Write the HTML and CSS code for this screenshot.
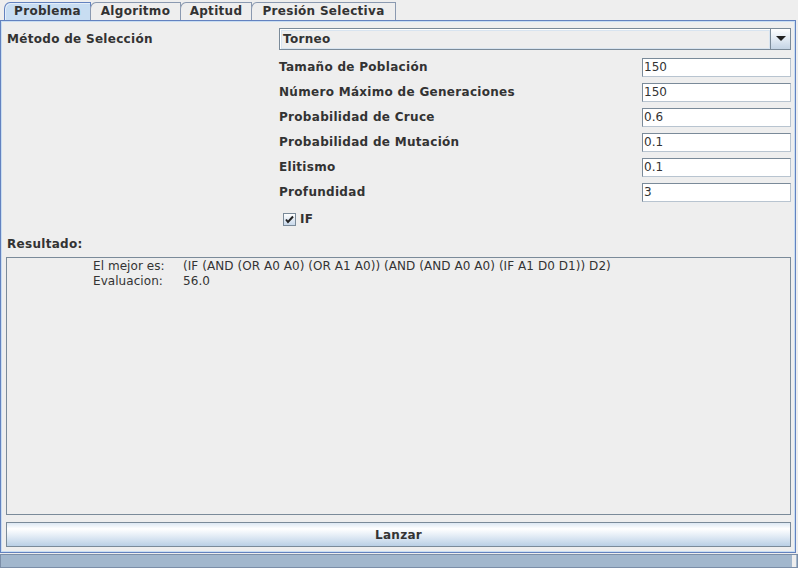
FILE: index.html
```html
<!DOCTYPE html>
<html>
<head>
<meta charset="utf-8">
<link rel="stylesheet" href="styles.css">
</head>
<body>
<div class="app">
  <div class="tabs">
    <div class="tab selected w1">Problema</div>
    <div class="tab w2">Algoritmo</div>
    <div class="tab w3">Aptitud</div>
    <div class="tab w4">Presión Selectiva</div>
  </div>
  <div class="panel">
    <div class="row-combo">
      <div class="label first">Método de Selección</div>
      <div class="combo">
        <div class="combo-value">Torneo</div>
        <div class="combo-btn"><svg width="10" height="6" viewBox="0 0 10 6"><path d="M0 0H10L5 5Z" fill="#222"/></svg></div>
      </div>
    </div>
    <div class="fields">
      <div class="frow"><div class="label">Tamaño de Población</div><div class="field">150</div></div>
      <div class="frow"><div class="label">Número Máximo de Generaciones</div><div class="field">150</div></div>
      <div class="frow"><div class="label">Probabilidad de Cruce</div><div class="field">0.6</div></div>
      <div class="frow"><div class="label">Probabilidad de Mutación</div><div class="field">0.1</div></div>
      <div class="frow"><div class="label">Elitismo</div><div class="field">0.1</div></div>
      <div class="frow"><div class="label">Profundidad</div><div class="field">3</div></div>
    </div>
    <div class="check-row">
      <div class="checkbox"><svg width="9" height="9" viewBox="0 0 9 9"><path d="M1 4.5L3 7L8 1.5" stroke="#222" stroke-width="2" fill="none"/></svg></div>
      <div class="label">IF</div>
    </div>
    <div class="label result-label">Resultado:</div>
    <div class="textarea">
      <div class="out">
        <span class="k">El mejor es:</span><span>(IF (AND (OR A0 A0) (OR A1 A0)) (AND (AND A0 A0) (IF A1 D0 D1)) D2)</span>
        <span class="k">Evaluacion:</span><span>56.0</span>
      </div>
    </div>
    <div class="button">Lanzar</div>
  </div>
  <div class="status"><div class="status-end"></div></div>
</div>
</body>
</html>
```
FILE: styles.css
```css
html, body {
  margin: 0;
  padding: 0;
  background: #eeeeee;
}
body {
  width: 798px;
  height: 568px;
  overflow: hidden;
  font-family: "DejaVu Sans", sans-serif;
  font-size: 12px;
  color: #333333;
}
.app {
  display: flex;
  flex-direction: column;
  height: 568px;
}
.tabs {
  height: 20px;
  display: flex;
  align-items: flex-end;
  padding-left: 4px;
  box-sizing: border-box;
}
.tab {
  height: 18px;
  box-sizing: border-box;
  border: 1px solid #8a99b0;
  border-bottom: none;
  border-top-left-radius: 6px 7px;
  background: #eeeeee;
  font-weight: bold;
  letter-spacing: 0.3px;
  line-height: 17px;
  text-align: center;
  margin-right: -1px;
}
.tab.selected {
  background: #c8ddf2;
  border-color: #6382bf;
  box-shadow: inset 1px 1px 0 #ffffff80;
}
.w1 { width: 87px; }
.w2 { width: 91px; }
.w3 { width: 72px; }
.w4 { width: 145px; }
.panel {
  flex: 1;
  width: 796px;
  box-sizing: border-box;
  border: 1px solid #6382bf;
  box-shadow: inset 1px 1px 0 #c8ddf2, inset -1px -1px 0 #c8ddf2;
  display: flex;
  flex-direction: column;
  padding: 7px 4px 5px 5px;
}
.label {
  font-weight: bold;
  letter-spacing: 0.3px;
  line-height: 15px;
  white-space: nowrap;
}
.row-combo {
  display: flex;
  align-items: center;
  height: 22px;
}
.row-combo .first {
  width: 272px;
  padding-left: 1px;
}
.combo {
  flex: 1;
  height: 22px;
  box-sizing: border-box;
  border: 1px solid #7a8a99;
  display: flex;
  background: #eeeeee;
}
.combo-value {
  flex: 1;
  font-weight: bold;
  letter-spacing: 0.3px;
  line-height: 17px;
  padding-top: 1px;
  padding-left: 2px;
  border: 1px solid #ffffff;
  border-right: none;
  border-bottom: none;
  box-shadow: inset 0 0 0 1px #d8e4f0;
}
.combo-btn {
  width: 19px;
  border-left: 1px solid #7a8a99;
  background: linear-gradient(#ffffff, #dce6f1 60%, #c3d3e4);
  display: flex;
  align-items: center;
  justify-content: center;
}
.fields {
  margin-top: 8px;
  display: flex;
  flex-direction: column;
  gap: 6px;
}
.frow {
  display: flex;
  align-items: center;
  justify-content: space-between;
  height: 19px;
  padding-left: 273px;
}
.field {
  width: 149px;
  height: 19px;
  box-sizing: border-box;
  border: 1px solid #7a8a99;
  border-right-color: #b8c4d0;
  border-bottom-color: #b8c4d0;
  background: #ffffff;
  line-height: 17px;
  padding-left: 1px;
}
.check-row {
  margin-top: 10px;
  height: 15px;
  display: flex;
  align-items: center;
  padding-left: 277px;
  gap: 4px;
}
.checkbox {
  width: 13px;
  height: 13px;
  box-sizing: border-box;
  border: 1px solid #7a8a99;
  background: linear-gradient(#ffffff, #c8d8ea);
  display: flex;
  align-items: center;
  justify-content: center;
}
.result-label {
  margin-top: 10px;
  padding-left: 1px;
}
.textarea {
  margin-top: 5px;
  flex: 1;
  border: 1px solid #7a8a99;
}
.out {
  display: grid;
  grid-template-columns: 90px auto;
  padding-left: 86px;
  padding-top: 1px;
  line-height: 15px;
  letter-spacing: 0.06px;
}
.button {
  margin-top: 7px;
  height: 25px;
  box-sizing: border-box;
  border: 1px solid #7a8a99;
  background: linear-gradient(#dde8f3 0%, #ffffff 25%, #e4edf6 55%, #b9cfe5 100%);
  font-weight: bold;
  letter-spacing: 0.3px;
  text-align: center;
  line-height: 21px;
  padding-top: 2px;
}
.status {
  margin-top: 1px;
  height: 14px;
  box-sizing: border-box;
  border: 1px solid #7b8ea8;
  background: #a2b7cd;
  display: flex;
  justify-content: flex-end;
}
.status-end {
  width: 4px;
  margin-right: 1px;
  background: #eeeeee;
}
```
